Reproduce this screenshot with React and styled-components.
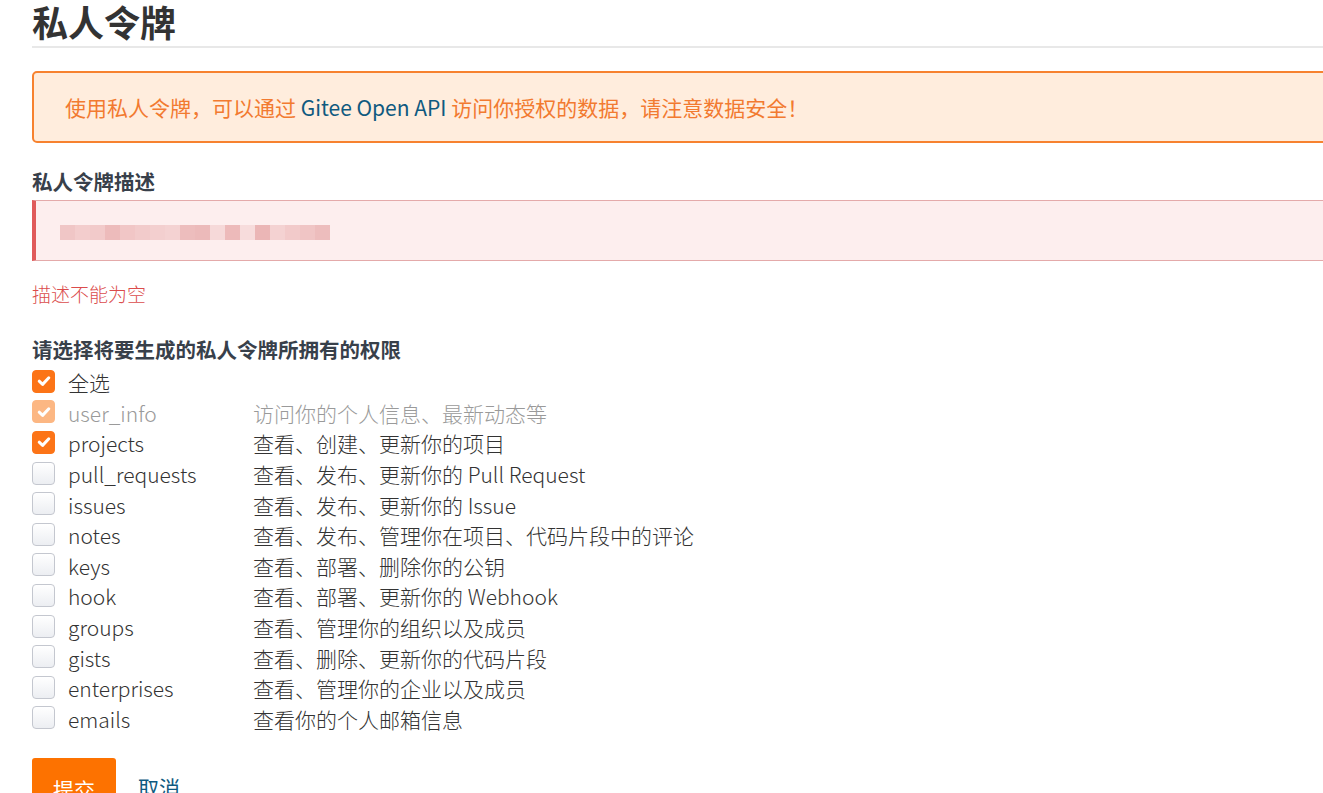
import React from 'react'
import styled, { createGlobalStyle } from 'styled-components'

const GlobalStyle = createGlobalStyle`
  html, body {
    margin: 0;
    padding: 0;
    background: #fff;
    overflow: hidden;
  }
  body {
    font-family: "Noto Sans CJK SC", sans-serif;
    color: #333;
  }
`

const scopes = [
  { name: 'user_info', desc: '访问你的个人信息、最新动态等', checked: true, disabled: true },
  { name: 'projects', desc: '查看、创建、更新你的项目', checked: true },
  { name: 'pull_requests', desc: '查看、发布、更新你的 Pull Request' },
  { name: 'issues', desc: '查看、发布、更新你的 Issue' },
  { name: 'notes', desc: '查看、发布、管理你在项目、代码片段中的评论' },
  { name: 'keys', desc: '查看、部署、删除你的公钥' },
  { name: 'hook', desc: '查看、部署、更新你的 Webhook' },
  { name: 'groups', desc: '查看、管理你的组织以及成员' },
  { name: 'gists', desc: '查看、删除、更新你的代码片段' },
  { name: 'enterprises', desc: '查看、管理你的企业以及成员' },
  { name: 'emails', desc: '查看你的个人邮箱信息' },
]

const mosaic = ['#f0c6c6', '#f3cdcd', '#f2caca', '#edbbbb', '#f1c6c6', '#f2cbcb', '#f3cfcf', '#f4d2d2', '#edbdbd', '#ecbaba', '#f6d9d9', '#edbaba', '#f7dcdc', '#ebb6b6', '#f4d2d2', '#f2caca', '#f0c5c5', '#edbdbd']

function App() {
  return (
    <Page>
      <GlobalStyle />
      <Title>私人令牌</Title>
      <Alert>
        使用私人令牌，可以通过 <ApiName>Gitee Open API</ApiName> 访问你授权的数据，请注意数据安全！
      </Alert>
      <Label>私人令牌描述</Label>
      <Input>
        <Mosaic>
          {mosaic.map((c, i) => (
            <Tile key={i} style={{ background: c }} />
          ))}
        </Mosaic>
      </Input>
      <Error>描述不能为空</Error>
      <Label $top={27}>请选择将要生成的私人令牌所拥有的权限</Label>
      <List>
        <Row>
          <Check $checked>
            <Tick />
          </Check>
          <Name>全选</Name>
        </Row>
        {scopes.map(s => (
          <Row key={s.name}>
            <Check $checked={s.checked} $disabled={s.disabled}>
              {s.checked && <Tick />}
            </Check>
            <Name $disabled={s.disabled}>{s.name}</Name>
            <Desc $disabled={s.disabled}>{s.desc}</Desc>
          </Row>
        ))}
      </List>
      <Actions>
        <Submit>提交</Submit>
        <Cancel href="#">取消</Cancel>
      </Actions>
    </Page>
  )
}

function Tick() {
  return (
    <svg width="16" height="16" viewBox="0 0 16 16">
      <path d="M3.2 8.2 L6.6 11.4 L12.8 4.8" fill="none" stroke="#fff" strokeWidth="3" strokeLinecap="round" strokeLinejoin="round" />
    </svg>
  )
}

export default App

const Page = styled.div`
  width: 1400px;
  padding-left: 32px;
  box-sizing: border-box;
`

const Title = styled.h1`
  margin: 0;
  font-size: 36px;
  font-weight: 700;
  line-height: 42px;
  height: 42px;
  padding-bottom: 4px;
  color: #333;
  border-bottom: 2px solid #e8e8e8;
`

const Alert = styled.div`
  margin-top: 23px;
  height: 72px;
  box-sizing: border-box;
  border: 2px solid #f7822f;
  border-radius: 5px;
  background: #ffeddd;
  color: #f27a30;
  font-size: 21px;
  display: flex;
  align-items: center;
  padding-left: 31px;
  white-space: pre;
`

const ApiName = styled.span`
  color: #0f5a80;
`

const Label = styled.div`
  margin-top: ${p => (p.$top || 24)}px;
  font-size: 20.5px;
  font-weight: 700;
  line-height: 28px;
  color: #38404a;
`

const Input = styled.div`
  margin-top: 5px;
  height: 61px;
  box-sizing: border-box;
  border: 1.5px solid #e4aaaa;
  border-left: 4px solid #e05a5a;
  background: #fdeeee;
  display: flex;
  align-items: center;
  padding: 3px 0 0 24px;
`

const Mosaic = styled.div`
  display: flex;
  height: 15px;
`

const Tile = styled.span`
  width: 15px;
  height: 15px;
`

const Error = styled.div`
  margin-top: 19px;
  font-size: 19px;
  line-height: 28px;
  color: #db4c4c;
  font-weight: 300;
`

const List = styled.div`
  margin-top: 4px;
  display: flex;
  flex-direction: column;
`

const Row = styled.div`
  display: flex;
  align-items: center;
  height: 30.6px;
  font-size: 21px;
  font-weight: 300;
`

const Check = styled.span`
  width: 23px;
  height: 23px;
  box-sizing: border-box;
  border-radius: 4px;
  display: flex;
  align-items: center;
  justify-content: center;
  margin-right: 13px;
  margin-top: -2px;
  background: ${p => (p.$checked ? (p.$disabled ? '#fcb783' : '#fc7417') : 'linear-gradient(#fff, #eceef2)')};
  border: 1px solid ${p => (p.$checked ? (p.$disabled ? '#fcb783' : '#fc7417') : '#c4c7cf')};
`

const Name = styled.span`
  width: 185px;
  color: ${p => (p.$disabled ? '#9a9a9a' : '#333')};
`

const Desc = styled.span`
  color: ${p => (p.$disabled ? '#9a9a9a' : '#333')};
`

const Actions = styled.div`
  margin-top: 24px;
  display: flex;
  align-items: flex-start;
`

const Submit = styled.button`
  width: 84px;
  height: 48px;
  border: none;
  border-radius: 3px;
  background: #fd7200;
  color: #fff;
  font-size: 21px;
  font-family: "Noto Sans CJK SC", sans-serif;
  padding: 14px 0 0;
  cursor: pointer;
`

const Cancel = styled.a`
  margin-left: 22px;
  margin-top: 14px;
  font-size: 21px;
  color: #0f5a80;
  text-decoration: none;
`
